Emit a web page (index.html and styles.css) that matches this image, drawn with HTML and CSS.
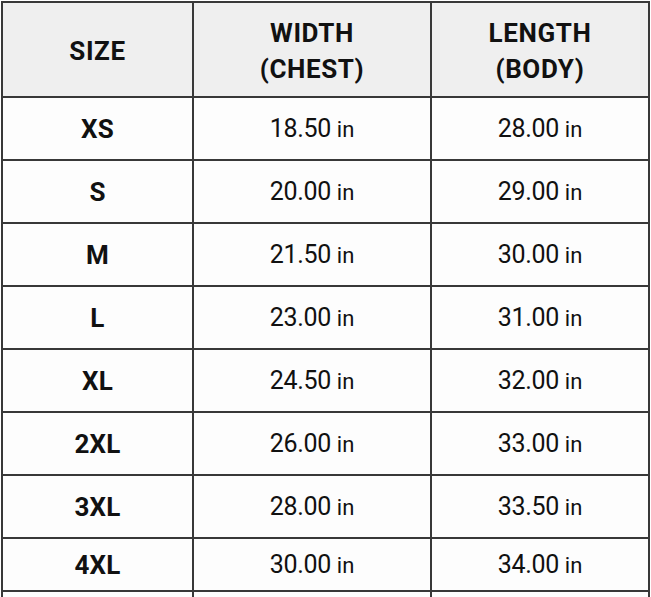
FILE: index.html
```
<!DOCTYPE html>
<html>
<head>
<meta charset="utf-8">
<link rel="stylesheet" href="styles.css">
</head>
<body>
<table class="chart">
  <colgroup>
    <col class="c-size">
    <col class="c-width">
    <col class="c-length">
  </colgroup>
  <thead>
    <tr class="head">
      <th>SIZE</th>
      <th>WIDTH<br>(CHEST)</th>
      <th>LENGTH<br>(BODY)</th>
    </tr>
  </thead>
  <tbody>
    <tr><td class="sz">XS</td><td>18.50 <span class="u">in</span></td><td>28.00 <span class="u">in</span></td></tr>
    <tr><td class="sz">S</td><td>20.00 <span class="u">in</span></td><td>29.00 <span class="u">in</span></td></tr>
    <tr><td class="sz">M</td><td>21.50 <span class="u">in</span></td><td>30.00 <span class="u">in</span></td></tr>
    <tr><td class="sz">L</td><td>23.00 <span class="u">in</span></td><td>31.00 <span class="u">in</span></td></tr>
    <tr><td class="sz">XL</td><td>24.50 <span class="u">in</span></td><td>32.00 <span class="u">in</span></td></tr>
    <tr><td class="sz">2XL</td><td>26.00 <span class="u">in</span></td><td>33.00 <span class="u">in</span></td></tr>
    <tr><td class="sz">3XL</td><td>28.00 <span class="u">in</span></td><td>33.50 <span class="u">in</span></td></tr>
    <tr class="last"><td class="sz">4XL</td><td>30.00 <span class="u">in</span></td><td>34.00 <span class="u">in</span></td></tr>
    <tr class="cut"><td></td><td></td><td></td></tr>
  </tbody>
</table>
</body>
</html>
```
FILE: styles.css
```
html, body {
  margin: 0;
  padding: 0;
  background: #ffffff;
  height: 597px;
  overflow: hidden;
}
body {
  font-family: Roboto, "Liberation Sans", sans-serif;
  color: #111111;
}
.chart {
  border-collapse: collapse;
  table-layout: fixed;
  width: 649px;
  margin: 1px 0 0 1px;
}
.c-size { width: 191px; }
.c-width { width: 238px; }
.c-length { width: 218px; }
.chart th,
.chart td {
  border: 2px solid #383838;
  text-align: center;
  vertical-align: middle;
  padding: 0;
}
.head th {
  background: #efefef;
  height: 91px;
  font-weight: 700;
  font-size: 26px;
  line-height: 36px;
  letter-spacing: 0.6px;
  padding-top: 2px;
}
tbody tr {
  height: 63px;
}
tbody td {
  font-size: 25px;
  font-weight: 400;
  letter-spacing: -0.3px;
  background: #fdfdfd;
  padding-top: 3px;
}
tbody td.sz {
  font-weight: 700;
  font-size: 26px;
  letter-spacing: 0.2px;
}
.u {
  font-size: 22px;
  letter-spacing: 0;
}
tbody tr.last {
  height: 53px;
}
tbody tr.cut {
  height: 8px;
}
```
